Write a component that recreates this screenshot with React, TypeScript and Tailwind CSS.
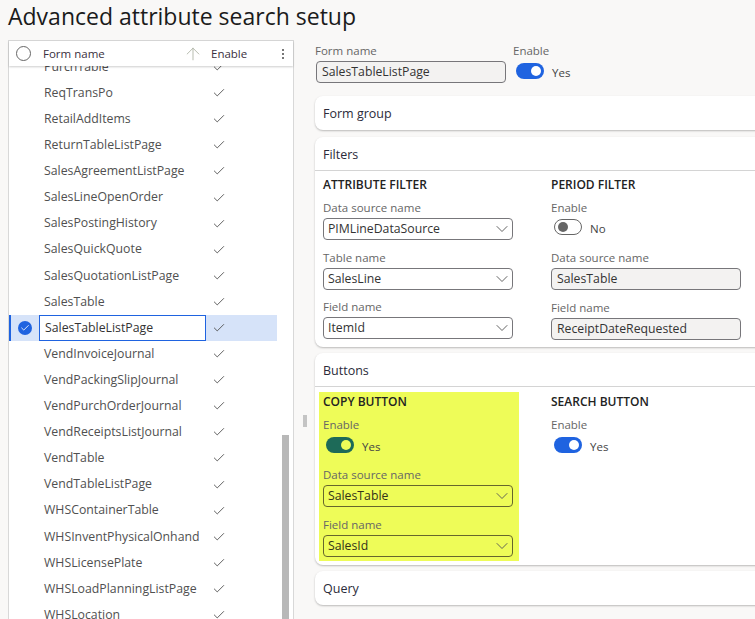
import React from 'react';
import { Check, ChevronDown, ArrowUp } from 'lucide-react';

const forms = [
  'PurchTable', 'ReqTransPo', 'RetailAddItems', 'ReturnTableListPage', 'SalesAgreementListPage',
  'SalesLineOpenOrder', 'SalesPostingHistory', 'SalesQuickQuote', 'SalesQuotationListPage', 'SalesTable',
  'SalesTableListPage', 'VendInvoiceJournal', 'VendPackingSlipJournal', 'VendPurchOrderJournal',
  'VendReceiptsListJournal', 'VendTable', 'VendTableListPage', 'WHSContainerTable',
  'WHSInventPhysicalOnhand', 'WHSLicensePlate', 'WHSLoadPlanningListPage', 'WHSLocation',
];

function Toggle({ on, color = 'bg-[#1f63e0]', label }: { on: boolean; color?: string; label: string }) {
  return (
    <div className="flex items-center h-[22px] gap-2 pl-[2.5px]">
      {on ? (
        <span className={`w-[28.5px] h-[16px] rounded-full flex items-center justify-end pr-[3px] ${color}`}>
          <span className={`w-[10px] h-[10px] rounded-full ${color === 'bg-[#1f63e0]' ? 'bg-white' : 'bg-[#eefc58]'}`} />
        </span>
      ) : (
        <span className="w-[28.5px] h-[16px] rounded-full flex items-center pl-[3px] border border-[#666] bg-white">
          <span className="w-[10px] h-[10px] rounded-full bg-[#666]" />
        </span>
      )}
      <span className="pt-[3px] text-[11.5px] leading-none text-[#444]">{label}</span>
    </div>
  );
}

function Label({ children }: { children: React.ReactNode }) {
  return <div className="pt-[1px] text-[11.5px] leading-[16px] text-[#666]">{children}</div>;
}

function Select({ value, tint }: { value: string; tint?: boolean }) {
  return (
    <div className={`w-[190px] h-[22px] mt-[2px] flex items-center justify-between pl-[4px] rounded-[4px] border text-[12.25px] ${tint ? 'border-[#66662c] text-[#33331a]' : 'border-[#77767a] bg-white text-[#333]'}`}>
      <span className="pt-[1px]">{value}</span>
      <ChevronDown className="w-[20px] h-[20px] shrink-0 text-[#555]" strokeWidth={1.1} />
    </div>
  );
}

function ReadOnly({ value }: { value: string }) {
  return (
    <div className="w-[190px] h-[22px] mt-[2px] flex items-center pl-[5px] rounded-[4px] border border-[#77767a] bg-[#f3f2f1] text-[12.25px] text-[#333]">
      <span className="pt-[1px]">{value}</span>
    </div>
  );
}

function SectionHead({ children }: { children: React.ReactNode }) {
  return <div className="text-[12px] leading-[16px] font-semibold text-[#222]">{children}</div>;
}

function CardTitle({ children, line }: { children: React.ReactNode; line?: boolean }) {
  return (
    <div className={`h-[34px] flex items-center px-2 pt-[3px] text-[12.5px] font-medium text-[#2b2b3a] ${line ? 'border-b border-[#d4d4d4]' : ''}`}>
      {children}
    </div>
  );
}

const cardClass = 'bg-white rounded-l-[8px] shadow-[0_1px_2px_rgba(0,0,0,0.25)]';

export default function App() {
  return (
    <div className="w-[755px] h-[619px] overflow-hidden flex flex-col bg-[#f9f8f7] font-['Open_Sans','Noto_Sans',sans-serif]">
      {/* Title */}
      <h1 className="h-[40px] pl-2 pt-[1px] text-[23px] leading-[30px] text-[#1b1b1b] font-normal shrink-0">
        Advanced attribute search setup
      </h1>

      <div className="flex flex-1 min-h-0">
        {/* Grid */}
        <div className="ml-2 w-[286px] shrink-0 flex flex-col bg-white border border-[#d8d8d8] border-b-0">
          <div className="relative z-10 h-[25px] shrink-0 flex items-center bg-white shadow-[0_1px_2px_rgba(0,0,0,0.2)] text-[11.5px] text-[#3a3040]">
            <span className="ml-[7px] w-[15px] h-[15px] shrink-0 rounded-full border border-[#666]" />
            <span className="ml-[12px] pt-[1px] w-[140px] shrink-0">Form name</span>
            <ArrowUp className="w-[20px] h-[20px] shrink-0 text-[#a9b0a0]" strokeWidth={1} />
            <span className="ml-[8px] pt-[1px] w-[71px] shrink-0">Enable</span>
            <span className="flex flex-col gap-[2px]">
              <span className="w-[2px] h-[2px] bg-[#777]" />
              <span className="w-[2px] h-[2px] bg-[#777]" />
              <span className="w-[2px] h-[2px] bg-[#777]" />
            </span>
          </div>
          <div className="flex-1 min-h-0 overflow-hidden flex">
            <div className="w-[268px] shrink-0 -mt-[12px]">
              {forms.map(name => {
                const selected = name === 'SalesTableListPage';
                return (
                  <div key={name} className={`h-[26.1px] flex items-center text-[12.3px] text-[#505050] ${selected ? 'bg-[#d6e3f9]' : ''}`}>
                    <span className={`w-[30px] h-full shrink-0 flex items-center justify-center ${selected ? 'border-l-2 border-[#1f63e0]' : ''}`}>
                      {selected && (
                        <span className="w-[14px] h-[14px] rounded-full bg-[#1f63e0] flex items-center justify-center">
                          <Check className="w-[10px] h-[10px] text-white" strokeWidth={2} />
                        </span>
                      )}
                    </span>
                    <span className={`w-[167px] shrink-0 h-full flex items-center pl-[5px] ${selected ? 'bg-white border border-[#1f63e0] pl-[4px] text-[#333]' : ''}`}>
                      {name}
                    </span>
                    <Check className="ml-[6px] w-[14px] h-[14px] text-[#4a4a4a]" strokeWidth={1.5} />
                  </div>
                );
              })}
            </div>
            <div className="flex-1 flex justify-center">
              <div className="w-[7px] mt-[369px] bg-[#b8b8b8]" />
            </div>
          </div>
        </div>

        {/* Splitter */}
        <div className="w-[21px] shrink-0 flex justify-center">
          <div className="mt-[375px] w-[4px] h-[12px] bg-[#c4c4c4] self-start" />
        </div>

        {/* Details */}
        <div className="w-[460px] shrink-0 pt-[2px] flex flex-col">
          <div className="flex h-[54px]">
            <div className="w-[198px] shrink-0">
              <Label>Form name</Label>
              <div className="pl-[1px]"><ReadOnly value="SalesTableListPage" /></div>
            </div>
            <div>
              <Label>Enable</Label>
              <div className="mt-[1px]"><Toggle on label="Yes" /></div>
            </div>
          </div>

          <div className={cardClass}>
            <CardTitle>Form group</CardTitle>
          </div>

          <div className={`${cardClass} mt-[7px] h-[210px]`}>
            <CardTitle line>Filters</CardTitle>
            <div className="flex pl-2 pt-[6px]">
              <div className="w-[228px] shrink-0">
                <SectionHead>ATTRIBUTE FILTER</SectionHead>
                <div className="mt-[6px] flex flex-col gap-[8.5px]">
                  <div><Label>Data source name</Label><Select value="PIMLineDataSource" /></div>
                  <div><Label>Table name</Label><Select value="SalesLine" /></div>
                  <div><Label>Field name</Label><Select value="ItemId" /></div>
                </div>
              </div>
              <div>
                <SectionHead>PERIOD FILTER</SectionHead>
                <div className="mt-[6px]"><Label>Enable</Label></div>
                <Toggle on={false} label="No" />
                <div className="mt-[11px]"><Label>Data source name</Label><ReadOnly value="SalesTable" /></div>
                <div className="mt-[9px]"><Label>Field name</Label><ReadOnly value="ReceiptDateRequested" /></div>
              </div>
            </div>
          </div>

          <div className={`${cardClass} mt-[6px] h-[212px]`}>
            <CardTitle line>Buttons</CardTitle>
            <div className="flex pl-[4px] pt-[5px]">
              <div className="w-[200px] h-[169px] shrink-0 bg-[#eefc58] pl-[4px] pt-[2px]">
                <SectionHead>COPY BUTTON</SectionHead>
                <div className="mt-[6px]"><Label>Enable</Label></div>
                <div className="mt-[1px]"><Toggle on color="bg-[#1d6a58]" label="Yes" /></div>
                <div className="mt-[10px]"><Label>Data source name</Label><Select value="SalesTable" tint /></div>
                <div className="mt-[9px]"><Label>Field name</Label><Select value="SalesId" tint /></div>
              </div>
              <div className="ml-[32px] pt-[2px]">
                <SectionHead>SEARCH BUTTON</SectionHead>
                <div className="mt-[6px]"><Label>Enable</Label></div>
                <div className="mt-[1px]"><Toggle on label="Yes" /></div>
              </div>
            </div>
          </div>

          <div className={`${cardClass} mt-[6px]`}>
            <CardTitle>Query</CardTitle>
          </div>
        </div>
      </div>
    </div>
  );
}
